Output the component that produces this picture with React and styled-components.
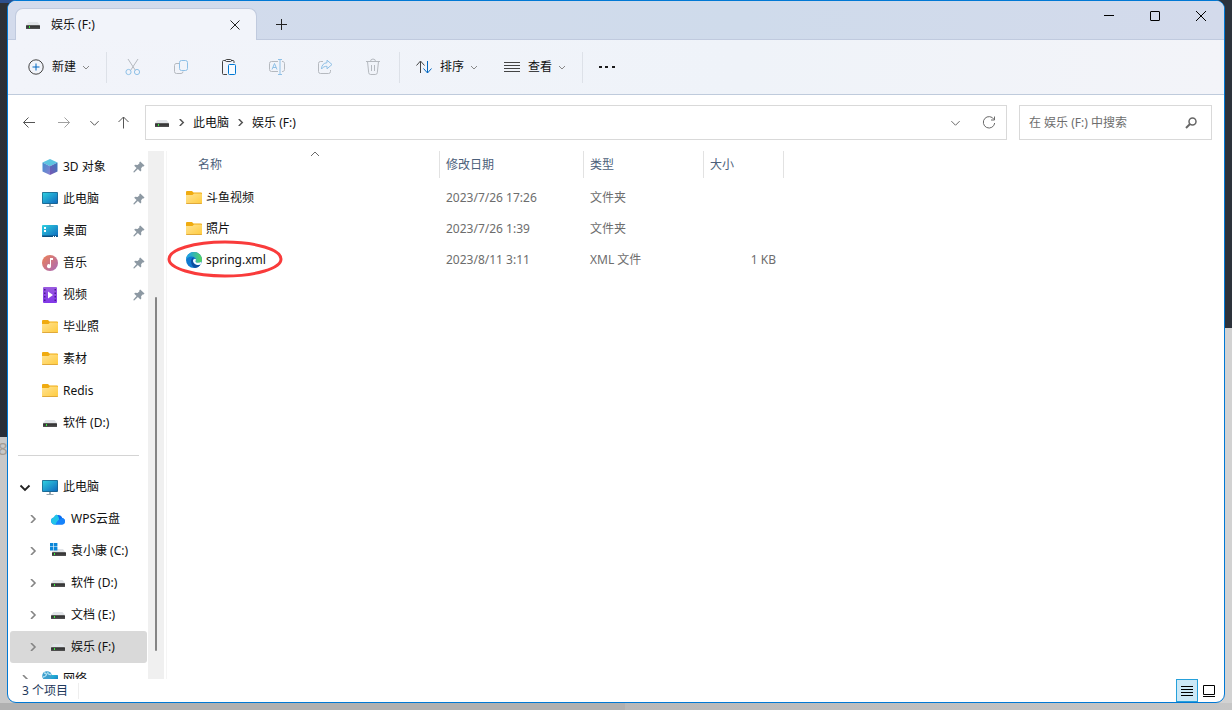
import React, { useState } from "react";
import styled, { createGlobalStyle, css } from "styled-components";

const quickAccess = [
  { name: "3D 对象", icon: "cube", pinned: true },
  { name: "此电脑", icon: "monitor", pinned: true },
  { name: "桌面", icon: "desktop", pinned: true },
  { name: "音乐", icon: "music", pinned: true },
  { name: "视频", icon: "video", pinned: true },
  { name: "毕业照", icon: "folder" },
  { name: "素材", icon: "folder" },
  { name: "Redis", icon: "folder" },
  { name: "软件 (D:)", icon: "drive" },
];

const drives = [
  { name: "WPS云盘", icon: "cloud" },
  { name: "袁小康 (C:)", icon: "system" },
  { name: "软件 (D:)", icon: "drive" },
  { name: "文档 (E:)", icon: "drive" },
  { name: "娱乐 (F:)", icon: "drive", selected: true },
];

const files = [
  { name: "斗鱼视频", icon: "folder", date: "2023/7/26 17:26", type: "文件夹", size: "" },
  { name: "照片", icon: "folder", date: "2023/7/26 1:39", type: "文件夹", size: "" },
  { name: "spring.xml", icon: "edge", date: "2023/8/11 3:11", type: "XML 文件", size: "1 KB", marked: true },
];

const shapes = {
  cube: (
    <>
      <path d="M8 0 15.5 3.4 8 7.2.5 3.4Z" fill="#5cc4e0" />
      <path d="M.5 3.4 8 7.2V16L.5 12.4Z" fill="url(#cubeLeft)" />
      <path d="M15.5 3.4 8 7.2V16l7.5-3.6Z" fill="url(#cubeRight)" />
    </>
  ),
  monitor: (
    <>
      <rect x="0" y="1" width="16" height="12" rx="1" fill="#1b5f86" />
      <rect x=".7" y="1.7" width="14.6" height="10.6" rx=".4" fill="url(#screen)" />
      <path d="M7 13h2v2h2.5v1h-7v-1H7Z" fill="#9aa7b0" />
    </>
  ),
  desktop: (
    <>
      <rect y="2" width="16" height="12" rx="1" fill="url(#screen)" />
      <path d="M0 12.5h16V13a1 1 0 0 1-1 1H1a1 1 0 0 1-1-1Z" fill="#0c4f80" />
      <path d="M2 4h2v2H2zM2 7h2v2H2zM11 13h1v1h-1zM13 13h1v1h-1z" fill="#fff" />
    </>
  ),
  music: (
    <>
      <circle cx="8" cy="8" r="8" fill="url(#music)" />
      <path d="M8 3h3v2H9v6.2a2 2 0 1 1-1-1.7Z" fill="#fff" />
    </>
  ),
  video: (
    <>
      <rect x="1" y="0" width="14" height="16" rx="1" fill="url(#video)" />
      <path
        d="M2 2h1.5v1.5H2zM2 5.5h1.5V7H2zM2 9h1.5v1.5H2zM2 12.5h1.5V14H2zM12.5 2H14v1.5h-1.5zM12.5 5.5H14V7h-1.5zM12.5 9H14v1.5h-1.5zM12.5 12.5H14V14h-1.5z"
        fill="#4b1a91"
      />
      <path d="M6 4.5 11 8 6 11.5Z" fill="#fff" />
    </>
  ),
  folder: (
    <>
      <path d="M0 2a1 1 0 0 1 1-1h5l1.500 1.500H15a1 1 0 0 1 1 1V7H0Z" fill="#f0ab10" />
      <path d="M0 5h6.500L8 3.500h7a1 1 0 0 1 1 1V13a1 1 0 0 1-1 1H1a1 1 0 0 1-1-1Z" fill="url(#folder)" />
      <path d="M0 13h16a1 1 0 0 1-1 1H1a1 1 0 0 1-1-1Z" fill="#e0a93a" />
    </>
  ),
  drive: (
    <>
      <path d="M3.5 5h9L15 8H1Z" fill="#e1e4e8" />
      <rect x="1" y="8" width="14" height="4" rx=".6" fill="url(#drive)" />
      <rect x="4" y="9" width="1" height="2" fill="#37f03a" />
    </>
  ),
  system: (
    <>
      <path d="M4 6h9l2 3H2Z" fill="#e1e4e8" />
      <rect x="2" y="9" width="14" height="4" rx=".6" fill="url(#drive)" />
      <rect x="4" y="10" width="1" height="2" fill="#37f03a" />
      <path d="M0 0h3.400v3.400H0zM4 0h3.400v3.400H4zM0 4h3.400v3.400H0zM4 4h3.400v3.400H4z" fill="#0a86d8" />
    </>
  ),
  cloud: (
    <>
      <path d="M4.500 13.500a3.500 3.500 0 0 1-.7-6.900A4.600 4.600 0 0 1 12.300 7 3.300 3.300 0 0 1 12 13.500Z" fill="#0a6cf0" />
      <path d="M4.500 13.500a3.500 3.500 0 0 1-.7-6.900A4.600 4.600 0 0 1 6.800 3.600C9 6 10.500 9 7 13.500Z" fill="#23c5e8" />
      <path d="M5.500 13.500c1.500-4 4.500-6 6.800-6.500A3.300 3.300 0 0 1 12 13.500Z" fill="#1583fb" />
    </>
  ),
  network: (
    <>
      <rect x="5" y="4" width="11" height="9" rx=".6" fill="url(#screen)" />
      <circle cx="5" cy="5" r="4.8" fill="#3c9fce" />
      <path d="M2 2c2 0 3 1 2 2.500S2.500 6 1 6M6 1c-1 2 1 2.500 3 2.500" stroke="#b7e3f2" strokeWidth="1.300" fill="none" />
    </>
  ),
  edge: (
    <>
      <circle cx="8" cy="8" r="8" fill="#1179cf" />
      <path d="M0 8a8 8 0 0 1 16 0c0 2-1.500 3-4 3-1.500 0-2.500-.5-2.500-1.200 0-.5.500-.8.500-1.800 0-2-2-3.500-4.500-3.500S1 6 0 8Z" fill="url(#edgeTop)" />
      <path d="M5 9c0-2 1.500-3.300 3-3.500C6 7.500 6.500 13 12.500 13c.8 0 1.500-.2 2.200-.6A8 8 0 0 1 9 16c-2.500-1-4-4-4-7Z" fill="#0c4fa0" />
      <path d="M7 8.500c.3-1.200 1.500-1.800 2.900-1.300.2.9-.4 1.500-.4 2.200 0 .8 1 1.400 2.500 1.400 1.200 0 2.300-.4 3.500-1L14.800 12.300c-.7.400-1.500.7-2.300.7C9.500 13 7 11 7 8.500Z" fill="#f4fbff" />
    </>
  ),
};

const Icon = ({ name }) => (
  <Glyph width="16" height="16" viewBox="0 0 16 16" aria-hidden="true">
    {shapes[name]}
  </Glyph>
);

const lines = {
  down: <path d="m1 3 3 3 3-3" />,
  up: <path d="m0 6 4-4 4 4" />,
  right: <path d="m2 0 4 4-4 4" />,
};

const Chevron = ({ to, size = 8, weight = 1, color = "#6a6a6a" }) => (
  <Line width={size} height={size} viewBox="0 0 8 8" stroke={color} strokeWidth={weight} aria-hidden="true">
    {lines[to]}
  </Line>
);

const Pin = () => (
  <Glyph width="12" height="12" viewBox="0 0 12 12" aria-hidden="true">
    <path d="M7.2.5 11.5 4.6l-.8.8-.8-.2-1.800 2 .2 2.300-.9.9-2.500-2.300L1.200 11.600l-.8-.3.1-.8L3.600 7.100 1.200 4.700l.9-.9 2.500.1 1.900-1.700-.2-.9Z" fill="#8d99a3" />
  </Glyph>
);

const Gradients = () => (
  <Defs width="0" height="0" aria-hidden="true">
    <defs>
      <linearGradient id="cubeLeft" x2="1" y2="1">
        <stop stopColor="#3f8fd0" />
        <stop offset="1" stopColor="#8a80d0" />
      </linearGradient>
      <linearGradient id="cubeRight" x1="1" x2="0" y2="1">
        <stop stopColor="#3878bd" />
        <stop offset="1" stopColor="#7a58b4" />
      </linearGradient>
      <linearGradient id="screen" x2="1" y2="1">
        <stop stopColor="#2fd0e0" />
        <stop offset="1" stopColor="#0f68bd" />
      </linearGradient>
      <linearGradient id="music" x2="1" y2="1">
        <stop stopColor="#ee8155" />
        <stop offset="1" stopColor="#a869b8" />
      </linearGradient>
      <linearGradient id="video" x2="0" y2="1">
        <stop stopColor="#9a5be0" />
        <stop offset="1" stopColor="#8137e8" />
      </linearGradient>
      <linearGradient id="folder" x2="1" y2="1">
        <stop stopColor="#ffe394" />
        <stop offset="1" stopColor="#ffcb3d" />
      </linearGradient>
      <linearGradient id="drive" x2="0" y2="1">
        <stop stopColor="#6b6b6b" />
        <stop offset=".4" stopColor="#333" />
        <stop offset="1" stopColor="#555" />
      </linearGradient>
      <linearGradient id="edgeTop" x2="1" y2="0">
        <stop offset=".2" stopColor="#22a5dc" />
        <stop offset="1" stopColor="#56d65c" />
      </linearGradient>
    </defs>
  </Defs>
);

const App = () => {
  const [search, setSearch] = useState("");
  return (
    <Desktop>
      <GlobalStyle />
      <Gradients />
      <Behind>8</Behind>
      <Window>
        <TitleBar>
          <Tab>
            <Icon name="drive" />
            <TabTitle>娱乐 (F:)</TabTitle>
            <IconButton aria-label="关闭标签页" $width={24}>
              <Line width="10" height="10" viewBox="0 0 10 10" stroke="#222">
                <path d="m.5.5 9 9m0-9-9 9" />
              </Line>
            </IconButton>
          </Tab>
          <IconButton aria-label="新标签页" $width={48}>
            <Line width="11" height="11" viewBox="0 0 11 11" stroke="#222">
              <path d="M5.500 0v11M0 5.500h11" />
            </Line>
          </IconButton>
          <Controls>
            <IconButton aria-label="最小化" $width={46}>
              <Line width="10" height="10" viewBox="0 0 10 10" stroke="#000">
                <path d="M0 4.500h10" />
              </Line>
            </IconButton>
            <IconButton aria-label="最大化" $width={46}>
              <Line width="10" height="10" viewBox="0 0 10 10" stroke="#000">
                <rect x=".5" y=".5" width="9" height="9" rx=".5" />
              </Line>
            </IconButton>
            <IconButton aria-label="关闭" $width={46}>
              <Line width="10" height="10" viewBox="0 0 10 10" stroke="#000">
                <path d="m0 0 10 10m0-10L0 10" />
              </Line>
            </IconButton>
          </Controls>
        </TitleBar>

        <Toolbar>
          <ToolButton $width={98}>
            <Line width="16" height="16" viewBox="0 0 16 16" stroke="#444">
              <circle cx="8" cy="8" r="7.200" />
              <path d="M8 4.500v7M4.500 8h7" stroke="#0067c0" />
            </Line>
            <span>新建</span>
            <Chevron to="down" color="#888" />
          </ToolButton>
          <Divider />
          <ToolGroup>
            <IconButton aria-label="剪切" $width={48}>
              <Line width="16" height="18" viewBox="0 0 16 18" stroke="#b5b9bf">
                <path d="m3 1 7.500 11.500M13 1 5.500 12.500" />
                <circle cx="3.500" cy="14" r="2.600" stroke="#8fc0e6" />
                <circle cx="12" cy="14" r="2.600" stroke="#8fc0e6" />
              </Line>
            </IconButton>
            <IconButton aria-label="复制" $width={48}>
              <Line width="16" height="16" viewBox="0 0 16 16" stroke="#b5b9bf">
                <path d="M6 4.500H3a2 2 0 0 0-1.500 2v6a2 2 0 0 0 2 2H8a2 2 0 0 0 2-2" />
                <rect x="6.500" y="1.500" width="8" height="10" rx="2" stroke="#8fc0e6" />
              </Line>
            </IconButton>
            <IconButton aria-label="粘贴" $width={48}>
              <Line width="16" height="18" viewBox="0 0 16 18" stroke="#444">
                <path d="M4.500 2.500H2.500a1 1 0 0 0-1 1v12a1 1 0 0 0 1 1H6M10 2.500h2a1 1 0 0 1 1 1V5" />
                <rect x="4.500" y="1.500" width="6" height="2" rx="1" />
                <rect x="7.500" y="6.500" width="7" height="10" rx="1" stroke="#0078d4" fill="#f7fbff" />
              </Line>
            </IconButton>
            <IconButton aria-label="重命名" $width={48}>
              <Line width="18" height="18" viewBox="0 0 18 18" stroke="#b5b9bf">
                <path d="M10 3.500H3.500a2 2 0 0 0-2 2v6a2 2 0 0 0 2 2H10M14 3.500a2 2 0 0 1 2.500 2v6a2 2 0 0 1-2.500 2" />
                <path d="M10 1.500h4M12 1.500v15M10 16.500h4M4 11.500l2.500-6 2.500 6M5 9.500h3" stroke="#8fc0e6" />
              </Line>
            </IconButton>
            <IconButton aria-label="共享" $width={48}>
              <Line width="16" height="16" viewBox="0 0 16 16" stroke="#b5b9bf">
                <path d="M6 2.500H3.500a2 2 0 0 0-2 2v8a2 2 0 0 0 2 2h8a2 2 0 0 0 2-2V11" />
                <path d="M10 1.200 15 5.500 10 9.800V7.300C7.500 7.300 6 8 4.500 10c0-3.500 2-6 5.500-6.300Z" stroke="#8fc0e6" />
              </Line>
            </IconButton>
            <IconButton aria-label="删除" $width={48}>
              <Line width="16" height="18" viewBox="0 0 16 18" stroke="#b5b9bf">
                <path d="M1 3.500h14M5.500 3.500a2.500 2.500 0 0 1 5 0M2.500 3.500l1.200 11.200a2 2 0 0 0 2 1.800h4.600a2 2 0 0 0 2-1.800l1.200-11.200M6.500 7v6M9.500 7v6" />
              </Line>
            </IconButton>
          </ToolGroup>
          <Divider />
          <ToolButton $width={94}>
            <Line width="16" height="16" viewBox="0 0 16 16" stroke="#444">
              <path d="M4.500 14V2.500M.5 6.500l4-4.500 4 4.500" />
              <path d="M11.500 2v12M7.500 9.500l4 4.500 4-4.500" stroke="#0067c0" />
            </Line>
            <span>排序</span>
            <Chevron to="down" color="#888" />
          </ToolButton>
          <ToolButton $width={88}>
            <Line width="16" height="16" viewBox="0 0 16 16" stroke="#444">
              <path d="M0 3.500h16M0 6.500h16M0 9.500h16M0 12.500h16" />
            </Line>
            <span>查看</span>
            <Chevron to="down" color="#888" />
          </ToolButton>
          <Divider />
          <IconButton aria-label="查看更多" $width={48}>
            <Glyph width="16" height="4" viewBox="0 0 16 4">
              <path d="M0 1h3v2H0zM6 1h3v2H6zM13 1h3v2h-3z" fill="#1a1a1a" />
            </Glyph>
          </IconButton>
        </Toolbar>

        <NavBar>
          <NavButtons>
            <IconButton aria-label="后退" $width={32}>
              <Line width="14" height="14" viewBox="0 0 14 14" stroke="#555">
                <path d="M13 6.500H1.500M6.500 1.500l-5 5 5 5" />
              </Line>
            </IconButton>
            <IconButton aria-label="前进" $width={38}>
              <Line width="14" height="14" viewBox="0 0 14 14" stroke="#a0a0a0">
                <path d="M1 6.500h11.500M7.500 1.500l5 5-5 5" />
              </Line>
            </IconButton>
            <IconButton aria-label="最近浏览的位置" $width={22}>
              <Chevron to="down" size={11} color="#555" />
            </IconButton>
            <IconButton aria-label="向上" $width={36}>
              <Line width="14" height="14" viewBox="0 0 14 14" stroke="#555">
                <path d="M7.500 12.500V1M2.500 6l5-5 5 5" />
              </Line>
            </IconButton>
          </NavButtons>
          <Address>
            <Icon name="drive" />
            <Chevron to="right" size={7} weight={1.5} color="#555" />
            <a href="#pc">此电脑</a>
            <Chevron to="right" size={7} weight={1.5} color="#555" />
            <a href="#f">娱乐 (F:)</a>
            <AddressEnd>
              <IconButton aria-label="以前的位置" $width={34}>
                <Chevron to="down" size={11} />
              </IconButton>
              <IconButton aria-label="刷新" $width={34}>
                <Line width="14" height="14" viewBox="0 0 14 14" stroke="#6a6a6a">
                  <path d="M12 3.500A5.700 5.700 0 1 0 12.700 7M12.500.5v3.500H9" />
                </Line>
              </IconButton>
            </AddressEnd>
          </Address>
          <SearchBox>
            <SearchInput
              aria-label="搜索"
              placeholder="在 娱乐 (F:) 中搜索"
              value={search}
              onChange={(e) => setSearch(e.target.value)}
            />
            <Line width="12" height="12" viewBox="0 0 12 12" stroke="#666" strokeWidth="1.500">
              <circle cx="7.500" cy="4.500" r="3.500" />
              <path d="M5 7 1 11" strokeWidth="2" />
            </Line>
          </SearchBox>
        </NavBar>

        <Body>
          <Sidebar>
            {quickAccess.map((e) => (
              <SideItem key={e.name}>
                <Icon name={e.icon} />
                <SideName>{e.name}</SideName>
                {e.pinned && <Pin />}
              </SideItem>
            ))}
            <SideRule />
            <SideItem $open>
              <Chevron to="down" size={12} weight={1.8} color="#222" />
              <Icon name="monitor" />
              <SideName>此电脑</SideName>
            </SideItem>
            {drives.map((e) => (
              <SideItem key={e.name} $nested $selected={e.selected}>
                <Chevron to="right" weight={1.6} color="#858585" />
                <Icon name={e.icon} />
                <SideName>{e.name}</SideName>
              </SideItem>
            ))}
            <SideItem $open>
              <Chevron to="right" weight={1.6} color="#858585" />
              <Icon name="network" />
              <SideName>网络</SideName>
            </SideItem>
          </Sidebar>
          <ScrollTrack>
            <ScrollThumb />
          </ScrollTrack>
          <Content>
            <FileTable>
              <colgroup>
                <col width="273" />
                <col width="144" />
                <col width="120" />
                <col width="80" />
              </colgroup>
              <thead>
                <tr>
                  <HeadCell $first>
                    名称
                    <SortMark>
                      <Chevron to="up" />
                    </SortMark>
                  </HeadCell>
                  <HeadCell>修改日期</HeadCell>
                  <HeadCell>类型</HeadCell>
                  <HeadCell>大小</HeadCell>
                </tr>
              </thead>
              <tbody>
                {files.map((e) => (
                  <tr key={e.name}>
                    <Cell $first>
                      <FileName>
                        <Icon name={e.icon} />
                        {e.name}
                      </FileName>
                      {e.marked && (
                        <Mark width="116" height="38" viewBox="0 0 116 38">
                          <ellipse cx="58" cy="19" rx="56" ry="17" />
                        </Mark>
                      )}
                    </Cell>
                    <Cell>{e.date}</Cell>
                    <Cell>{e.type}</Cell>
                    <Cell $right>{e.size}</Cell>
                  </tr>
                ))}
              </tbody>
            </FileTable>
          </Content>
        </Body>

        <StatusBar>
          <Count>3 个项目</Count>
          <ViewButton aria-label="详细信息" $active>
            <Line width="12" height="12" viewBox="0 0 12 12" stroke="#000">
              <path d="M0 1.500h12M0 4.500h12M0 7.500h12M0 10.500h12" />
            </Line>
          </ViewButton>
          <ViewButton aria-label="大缩略图">
            <Line width="12" height="12" viewBox="0 0 12 12" stroke="#000">
              <path d="M.5.5h11v9H.5zM0 11.500h12" />
            </Line>
          </ViewButton>
        </StatusBar>
      </Window>
    </Desktop>
  );
};

export default App;

const GlobalStyle = createGlobalStyle`
  * {
    box-sizing: border-box;
  }
  body {
    margin: 0;
    font: 12px/16px "Noto Sans", "Noto Sans CJK SC", sans-serif;
    color: #111;
  }
  button, input {
    font: inherit;
    color: inherit;
    border: 0;
    padding: 0;
    background: none;
  }
  a {
    color: inherit;
    text-decoration: none;
  }
`;
const Desktop = styled.div`
  position: relative;
  height: 100vh;
  padding: 0 7px 7px;
  overflow: hidden;
  background:
    linear-gradient(#2d4f8c, #2d4f8c) 0 0 / 20px 3px no-repeat,
    linear-gradient(#2d3036, #292e38 437px, #c8c8c8 437px) 0 0 / 20px calc(100% - 7px) no-repeat,
    linear-gradient(#2d323b 328px, #d2d2d2 328px) 100% 0 / 20px calc(100% - 7px) no-repeat,
    linear-gradient(90deg, #b0b0b0 625px, #b8b8b8 625px, #c6c6c6);
`;
const Behind = styled.span`
  position: absolute;
  left: -2px;
  top: 441px;
  font-size: 17px;
  color: #a39c94;
`;
const Defs = styled.svg`
  position: absolute;
`;
const Window = styled.main`
  position: relative;
  display: flex;
  flex-direction: column;
  height: 100%;
  border: 1px solid #0078d4;
  border-radius: 9px;
  overflow: hidden;
  background: #fff;
`;
const Glyph = styled.svg`
  display: block;
  flex: none;
`;
const Line = styled(Glyph)`
  fill: none;
  path {
    vector-effect: non-scaling-stroke;
  }
`;
const IconButton = styled.button`
  display: flex;
  align-items: center;
  justify-content: center;
  flex: none;
  width: ${({ $width }) => $width}px;
  height: 30px;
`;
const TitleBar = styled.header`
  display: flex;
  align-items: flex-end;
  height: 39px;
  padding-left: 7px;
  border-bottom: 1px solid #c0cade;
  background: linear-gradient(90deg, #d3dbec, #cfdbeb 60%, #d3daeb);
`;
const Tab = styled.div`
  display: flex;
  align-items: center;
  width: 242px;
  height: 32px;
  margin-bottom: -1px;
  padding: 0 9px;
  border: 1px solid #c0cade;
  border-bottom: 0;
  border-radius: 8px 8px 0 0;
  background: #f2f4fa;
`;
const TabTitle = styled.span`
  flex: 1;
  padding-left: 10px;
`;
const Controls = styled.div`
  display: flex;
  align-self: flex-start;
  margin-left: auto;
`;
const Toolbar = styled.div`
  display: flex;
  align-items: center;
  height: 55px;
  border-bottom: 1px solid #bfcbdc;
  background: linear-gradient(90deg, #f2f4fa, #eff3f9 60%, #f3f4f9);
`;
const ToolGroup = styled.div`
  display: flex;
  padding: 0 2px;
`;
const ToolButton = styled.button`
  display: flex;
  align-items: center;
  justify-content: flex-end;
  gap: 8px;
  width: ${({ $width }) => $width}px;
  height: 32px;
  padding-right: 16px;
  svg:last-child {
    margin-left: -2px;
  }
`;
const Divider = styled.hr`
  width: 1px;
  height: 31px;
  margin: 0;
  border: 0;
  background: #dde1e8;
`;
const NavBar = styled.div`
  display: flex;
  align-items: center;
  gap: 12px;
  padding: 10px 12px 11px 5px;
`;
const NavButtons = styled.div`
  display: flex;
  width: 120px;
`;
const Address = styled.nav`
  display: flex;
  flex: 1;
  align-items: center;
  gap: 8px;
  height: 35px;
  padding-left: 8px;
  border: 1px solid #d9d9d9;
`;
const AddressEnd = styled.div`
  display: flex;
  margin-left: auto;
`;
const SearchBox = styled.label`
  display: flex;
  align-items: center;
  width: 193px;
  height: 35px;
  padding: 0 14px 0 9px;
  border: 1px solid #d9d9d9;
`;
const SearchInput = styled.input`
  flex: 1;
  min-width: 0;
  outline: 0;
  &::placeholder {
    color: #6d6d6d;
    opacity: 1;
  }
`;
const Body = styled.div`
  display: flex;
  flex: 1;
  min-height: 0;
`;
const Sidebar = styled.aside`
  width: 140px;
  padding: 0 1px 0 2px;
  overflow: hidden;
`;
const SideItem = styled.div`
  display: flex;
  align-items: center;
  height: 32px;
  padding: 0 2px 0 32px;
  border-radius: 3px;
  ${({ $open }) =>
    $open &&
    css`
      padding-left: 9px;
      > svg:first-child {
        width: 12px;
        margin-right: 11px;
      }
    `}
  ${({ $nested }) =>
    $nested &&
    css`
      padding-left: 19px;
      > svg:first-child {
        margin-right: 13px;
      }
    `}
  ${({ $selected }) =>
    $selected &&
    css`
      background: #d9d9d9;
    `}
`;
const SideName = styled.span`
  flex: 1;
  padding-left: 5px;
  white-space: nowrap;
`;
const SideRule = styled.hr`
  height: 1px;
  margin: 16px 8px 15px;
  border: 0;
  background: #d4d4d4;
`;
const ScrollTrack = styled.div`
  width: 16px;
  padding: 146px 7px 28px;
  background: #f0f0f0;
`;
const ScrollThumb = styled.div`
  height: 100%;
  border-radius: 1px;
  background: #858585;
`;
const Content = styled.section`
  flex: 1;
  margin-left: 2px;
  border-left: 1px solid #f5f5f5;
`;
const FileTable = styled.table`
  width: 617px;
  table-layout: fixed;
  border-spacing: 0;
  thead::after {
    content: "";
    display: block;
    height: 4px;
  }
`;
const HeadCell = styled.th`
  position: relative;
  height: 27px;
  padding: 0 6px;
  padding-left: ${({ $first }) => ($first ? 31 : 6)}px;
  border-right: 1px solid #e2e2e2;
  color: #4c607a;
  font-weight: 400;
  text-align: left;
`;
const SortMark = styled.span`
  position: absolute;
  top: -1px;
  left: 144px;
`;
const Cell = styled.td`
  position: relative;
  height: 31px;
  padding: 0 8px 0 6px;
  padding-left: ${({ $first }) => ($first ? 19 : 6)}px;
  color: ${({ $first }) => ($first ? "#111" : "#6d6d6d")};
  text-align: ${({ $right }) => ($right ? "right" : "left")};
`;
const FileName = styled.div`
  display: flex;
  align-items: center;
  gap: 4px;
`;
const Mark = styled.svg`
  position: absolute;
  left: 0;
  top: -4px;
  fill: none;
  stroke: #f93b3b;
  stroke-width: 3px;
`;
const StatusBar = styled.footer`
  display: flex;
  align-items: center;
  height: 23px;
  padding: 0 4px 0 14px;
  color: #1e395b;
`;
const Count = styled.span`
  margin-right: auto;
  padding-right: 10px;
  border-right: 1px solid #eee;
`;
const ViewButton = styled.button`
  display: flex;
  align-items: center;
  justify-content: center;
  width: 22px;
  height: 23px;
  ${({ $active }) =>
    $active &&
    css`
      border: 1px solid #26a0da;
      background: #cce8f6;
    `}
`;
